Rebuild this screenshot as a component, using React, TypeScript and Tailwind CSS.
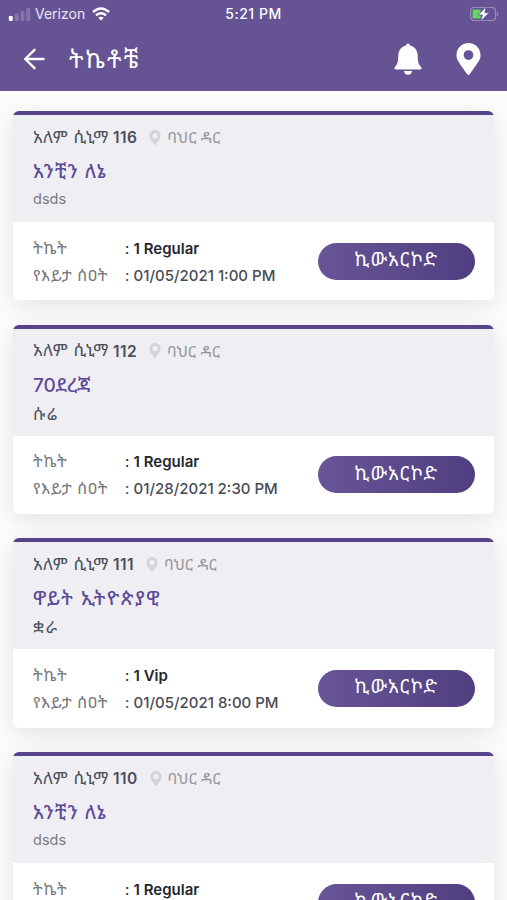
import React from "react";

type Ticket = {
  hall: string;
  title: string;
  titleTracking: string;
  place: string;
  placeStyle: string;
  kind: string;
  date: string;
};

const latinPlace = "text-[14.5px] text-[#777b84]";
const amharicPlace = "pt-px text-[17px] tracking-[1.6px] text-[#50545d]";

const tickets: Ticket[] = [
  { hall: "116", title: "አንቺን ለኔ", titleTracking: "tracking-[1px]", place: "dsds", placeStyle: latinPlace, kind: "1 Regular", date: "01/05/2021 1:00 PM" },
  { hall: "112", title: "70ደረጃ", titleTracking: "tracking-[-0.1px]", place: "ሱሬ", placeStyle: amharicPlace, kind: "1 Regular", date: "01/28/2021 2:30 PM" },
  { hall: "111", title: "ዋይት ኢትዮጵያዊ", titleTracking: "tracking-[1.6px]", place: "ቋራ", placeStyle: amharicPlace, kind: "1 Vip", date: "01/05/2021 8:00 PM" },
  { hall: "110", title: "አንቺን ለኔ", titleTracking: "tracking-[1px]", place: "dsds", placeStyle: latinPlace, kind: "1 Regular", date: "01/05/2021 1:00 PM" },
];

const pinPath =
  "M172.3 501.7C27 291 0 269.4 0 192 0 86 86 0 192 0s192 86 192 192c0 77.4-27 99-172.3 309.7-9.5 13.8-29.9 13.8-39.4 0z";

function Pin({ className, hole, radius }: { className: string; hole: string; radius: number }) {
  return (
    <svg viewBox="0 0 384 512" className={className}>
      <path d={pinPath} fill="currentColor" />
      <circle cx="192" cy="192" r={radius} fill={hole} />
    </svg>
  );
}

function StatusBar() {
  return (
    <div className="grid h-7 grid-cols-3 items-center pl-2 pr-2 text-[13px] leading-none text-white">
      <div className="flex items-center">
        <svg viewBox="0 0 23 13" className="h-[13px] w-[23px]" fill="#fff">
          <rect x="0.8" y="8" width="4" height="5" rx="1" />
          <rect x="6.8" y="5.5" width="4" height="7.5" rx="1" opacity=".2" />
          <rect x="12.5" y="3" width="4" height="10" rx="1" opacity=".2" />
          <rect x="18.2" y="0" width="4" height="13" rx="1" opacity=".2" />
        </svg>
        <span className="ml-1 w-[51px] whitespace-nowrap text-[14px] text-[#ebe4f6]">Verizon</span>
        <svg viewBox="0 0 18 14" className="ml-1.5 h-[14px] w-[18px]" fill="none" stroke="#fff" strokeWidth="2.4">
          <path d="M1 5Q9-2.2 17 5M4 8.3Q9 4 14 8.3" />
          <path d="M6.3 10.7Q9 8.7 11.7 10.7L9 13.5Z" fill="#fff" stroke="none" />
        </svg>
      </div>
      <span className="text-center text-[14px] font-medium tracking-[0.5px]">5:21 PM</span>
      <svg viewBox="0 0 30 16" className="h-4 w-[30px] justify-self-end">
        <rect x="1.6" y="1.5" width="25" height="13" rx="3.5" fill="none" stroke="#9a8bb9" strokeWidth="1.2" />
        <path d="M28 5.5Q31 8 28 10.5Z" fill="#9a8bb9" />
        <rect x="3.6" y="3.5" width="8" height="9" rx="1.2" fill="#63d563" />
        <path d="M17 .7L9.4 9h4L11.5 15.3 20 6.7h-4.2z" fill="#fff" stroke="#655394" strokeWidth=".7" />
      </svg>
    </div>
  );
}

function NavBar() {
  return (
    <div className="flex h-[63px] items-center pl-[23px] pr-[26px] pb-[1px] text-white">
      <svg viewBox="0 0 22 22" className="h-[22px] w-[22px]" fill="none" stroke="currentColor" strokeWidth="2.4" strokeLinecap="round" strokeLinejoin="round">
        <path d="M11.5 1.8L2.2 11l9.3 9.2M2.2 11H20.5" />
      </svg>
      <h1 className="ml-6 flex-1 whitespace-nowrap pt-0.5 text-[24px] leading-7 tracking-[2.2px]">ትኬቶቼ</h1>
      <svg viewBox="0 0 28 32" className="h-8 w-7" fill="currentColor">
        <path d="M14 .5c1.1 0 1.9.8 2 2.1 4.4 1 7.5 4.8 7.7 9.5.2 6.3.5 8.1 2.1 10.4l1.4 1.8c.9 1.1.3 2.2-1 2.2H1.8c-1.3 0-1.9-1.1-1-2.2l1.4-1.8c1.6-2.3 1.9-4.1 2.1-10.4.2-4.7 3.3-8.5 7.7-9.5.1-1.3.9-2.1 2-2.1z" />
        <path d="M10 28h8c0 2.2-1.7 3.7-4 3.7s-4-1.5-4-3.7z" />
      </svg>
      <Pin className="ml-[34px] h-8 w-[25px]" hole="#655394" radius={78} />
    </div>
  );
}

function TicketCard({ ticket }: { ticket: Ticket }) {
  return (
    <article className="h-[189.3px] shrink-0 overflow-hidden rounded-[6px] bg-white shadow-[0_6px_24px_rgba(0,0,0,0.1)]">
      <header className="h-[111px] border-t-4 border-[#55448a] bg-[#efeef3] pl-5">
        <div className="flex h-11 items-center whitespace-nowrap text-[16px]">
          <span className="pt-px text-[17px] tracking-[0.6px] text-[#4b4f59]">አለም ሲኒማ</span>
          <span className="ml-[4px] pt-px text-[15.5px] font-semibold tracking-[0.4px] text-[#4b4f59]">{ticket.hall}</span>
          <Pin className="ml-3 h-[15px] w-[12px] text-[#d4d4d7]" hole="#efeef3" radius={88} />
          <span className="ml-1.5 text-[#97979b]">ባህር ዳር</span>
        </div>
        <h2 className={`h-[26px] whitespace-nowrap text-[19px] font-medium leading-[26px] text-[#5e4b98] ${ticket.titleTracking}`}>{ticket.title}</h2>
        <p className={`h-[28px] whitespace-nowrap leading-[28px] ${ticket.placeStyle}`}>{ticket.place}</p>
      </header>
      <div className="flex h-[78px] items-center justify-between pl-5 pr-[19px]">
        <dl className="grid grid-cols-[92px_auto] whitespace-nowrap pt-px text-[15px] leading-[27px]">
          <dt className="text-[16px] tracking-[0.8px] text-[#74777b]">ትኬት</dt>
          <dd className="font-semibold text-[#25272e]"><span className="font-normal">: </span>{ticket.kind}</dd>
          <dt className="text-[16px] tracking-[0.5px] text-[#74777b]">የእይታ ሰዐት</dt>
          <dd className="font-medium text-[#484c55]"><span className="font-normal">: </span>{ticket.date}</dd>
        </dl>
        <button className="h-[37px] w-[157px] rounded-full bg-linear-to-r from-[#675598] to-[#503f80] pb-[3px] text-[19px] leading-none tracking-[1.4px] text-white">
          ኪውአርኮድ
        </button>
      </div>
    </article>
  );
}

export default function App() {
  return (
    <div className="h-[900px] w-[507px] overflow-hidden bg-[#fcfcfc] font-['Inter','Noto_Sans_Ethiopic','Noto_Sans',sans-serif]">
      <div className="h-[91px] bg-[#655394]">
        <StatusBar />
        <NavBar />
      </div>
      <main className="flex flex-col gap-[24.4px] pl-[13px] pr-[13px] pt-5">
        {tickets.map((t) => (
          <TicketCard key={t.hall} ticket={t} />
        ))}
      </main>
    </div>
  );
}
